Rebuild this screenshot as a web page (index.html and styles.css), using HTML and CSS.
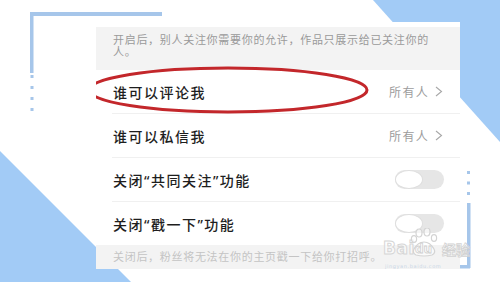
FILE: index.html
```html
<!DOCTYPE html>
<html lang="zh-CN">
<head>
<meta charset="utf-8">
<link rel="stylesheet" href="styles.css">
</head>
<body>
<div class="stage">
  <svg class="deco" width="500" height="282" viewBox="0 0 500 282">
    <polygon class="tri" points="373,0 500,0 500,142"/>
    <polygon class="tri" points="0,151 0,282 131,282"/>
    <rect class="br" x="30" y="12" width="132" height="4"/>
    <rect class="br" x="30" y="12" width="3.5" height="61"/>
    <rect class="br" x="30.5" y="75" width="3" height="3"/>
    <rect class="br" x="30.5" y="86" width="3" height="3"/>
    <rect class="br" x="30.5" y="97" width="3" height="3"/>
    <rect class="br" x="30.5" y="108" width="3" height="3"/>
    <rect class="br" x="467" y="171" width="3" height="3"/>
    <rect class="br" x="467" y="181.5" width="3" height="3"/>
    <rect class="br" x="467" y="192" width="3" height="3"/>
    <rect class="br" x="467" y="203" width="3.5" height="65"/>
    <rect class="br" x="340" y="265" width="130" height="3.5"/>
  </svg>

  <div class="card">
    <div class="note note-top">开启后，别人关注你需要你的允许，作品只展示给已关注你的人。</div>
    <div class="row">
      <span class="title">谁可以评论我</span>
      <span class="value">所有人<svg class="chev" width="8" height="11" viewBox="0 0 8 11"><polyline points="1,1 6.5,5.5 1,10"/></svg></span>
    </div>
    <div class="row">
      <span class="title">谁可以私信我</span>
      <span class="value">所有人<svg class="chev" width="8" height="11" viewBox="0 0 8 11"><polyline points="1,1 6.5,5.5 1,10"/></svg></span>
    </div>
    <div class="row">
      <span class="title">关闭“共同关注”功能</span>
      <span class="toggle"><span class="knob"></span></span>
    </div>
    <div class="row row-last">
      <span class="title">关闭“戳一下”功能</span>
      <span class="toggle"><span class="knob"></span></span>
    </div>
    <div class="note note-bottom">关闭后，粉丝将无法在你的主页戳一下给你打招呼。</div>

    <svg class="mark" width="300" height="60" viewBox="0 0 300 60">
      <ellipse cx="132" cy="68" rx="139" ry="22" transform="translate(0,-38)"/>
    </svg>
  </div>

  <div class="watermark">
    <span class="wm-bai">Bai</span>
    <span class="wm-paw">
      <svg width="30" height="30" viewBox="0 0 30 30">
        <ellipse cx="9" cy="5" rx="3" ry="4"/>
        <ellipse cx="17" cy="4" rx="3" ry="4"/>
        <ellipse cx="4" cy="11" rx="2.6" ry="3.4"/>
        <ellipse cx="24" cy="10" rx="2.6" ry="3.4"/>
        <path d="M6 27 Q2 25 4 21 Q8 14 14 14 Q20 14 24 21 Q26 25 22 27 Q14 29 6 27 Z"/>
      </svg>
      <span class="wm-du">du</span>
    </span>
    <span class="wm-jy">经验</span>
    <span class="wm-url">jingyan.baidu.com</span>
  </div>
</div>
</body>
</html>
```

FILE: styles.css
```css
html, body {
  margin: 0;
  padding: 0;
  background: #ffffff;
}

.stage {
  position: relative;
  width: 500px;
  height: 282px;
  overflow: hidden;
  background: #ffffff;
  box-sizing: border-box;
  padding: 22px 0 0 96px;
  font-family: "Noto Sans", "Noto Sans CJK SC", sans-serif;
}

.deco {
  position: absolute;
  left: 0;
  top: 0;
  z-index: 0;
}

.tri {
  fill: #a2cbf6;
}

.br {
  fill: #a6c6ea;
}

.card {
  position: relative;
  z-index: 1;
  width: 364px;
  background: #ffffff;
  padding-top: 5px;
  overflow: hidden;
}

.note {
  background: #f3f3f3;
  padding-left: 17px;
  padding-right: 20px;
  font-size: 11px;
  line-height: 12px;
  letter-spacing: 0.7px;
}

.note-top {
  color: #9a9a9a;
  padding-top: 7px;
  padding-bottom: 12px;
}

.note-bottom {
  color: #c4c4c4;
  padding-top: 6px;
  padding-bottom: 6px;
}

.row {
  display: flex;
  align-items: center;
  justify-content: space-between;
  height: 43px;
  margin-left: 16px;
  padding-right: 16px;
  border-bottom: 1px solid #f0f0f0;
}

.row:first-of-type {
  margin-top: 1px;
}

.row-last {
  border-bottom: none;
}

.title {
  font-size: 14px;
  font-weight: 500;
  color: #1e1e1e;
  letter-spacing: 1.5px;
  padding-left: 1px;
}

.value {
  display: flex;
  align-items: center;
  font-size: 12px;
  color: #9c9c9c;
  letter-spacing: 1.3px;
}

.chev {
  margin-left: 6px;
  margin-right: 1px;
}

.chev polyline {
  fill: none;
  stroke: #a8a8a8;
  stroke-width: 1.1;
}

.toggle {
  display: flex;
  width: 49px;
  height: 19px;
  border-radius: 10px;
  background: #e6e6e6;
  box-sizing: border-box;
}

.knob {
  width: 28px;
  height: 19px;
  border-radius: 50%;
  background: #ffffff;
  box-sizing: border-box;
  border: 1.5px solid #dedede;
}

.mark {
  position: absolute;
  left: 0;
  top: 38px;
  overflow: visible;
}

.mark ellipse {
  fill: none;
  stroke: #c3272b;
  stroke-width: 3;
}

.watermark {
  position: absolute;
  left: 383px;
  top: 228px;
  width: 90px;
  height: 50px;
  z-index: 3;
  font-family: "DejaVu Sans", sans-serif;
}

.wm-bai {
  position: absolute;
  left: 0;
  top: 12px;
  font-size: 17px;
  line-height: 17px;
  font-weight: bold;
  color: rgba(255, 255, 255, 0.6);
  -webkit-text-stroke: 1px #d6d6d6;
  letter-spacing: 0.5px;
}

.wm-paw {
  position: absolute;
  left: 27px;
  top: 0;
  width: 30px;
  height: 30px;
}

.wm-paw svg ellipse,
.wm-paw svg path {
  fill: rgba(255, 255, 255, 0.6);
  stroke: #d4d4d4;
  stroke-width: 1.2;
}

.wm-du {
  position: absolute;
  left: 5px;
  top: 15px;
  font-size: 12px;
  line-height: 12px;
  font-weight: bold;
  color: rgba(255, 255, 255, 0.7);
  -webkit-text-stroke: 0.8px #cfcfcf;
}

.wm-jy {
  position: absolute;
  left: 59px;
  top: 14px;
  font-family: "Noto Sans CJK SC", sans-serif;
  font-size: 14px;
  line-height: 15px;
  font-weight: bold;
  color: rgba(255, 255, 255, 0.5);
  -webkit-text-stroke: 0.8px #d2d2d2;
}

.wm-url {
  position: absolute;
  left: 2px;
  top: 36px;
  font-size: 5px;
  line-height: 5px;
  color: #c9d6e6;
  letter-spacing: 0.6px;
}
```
